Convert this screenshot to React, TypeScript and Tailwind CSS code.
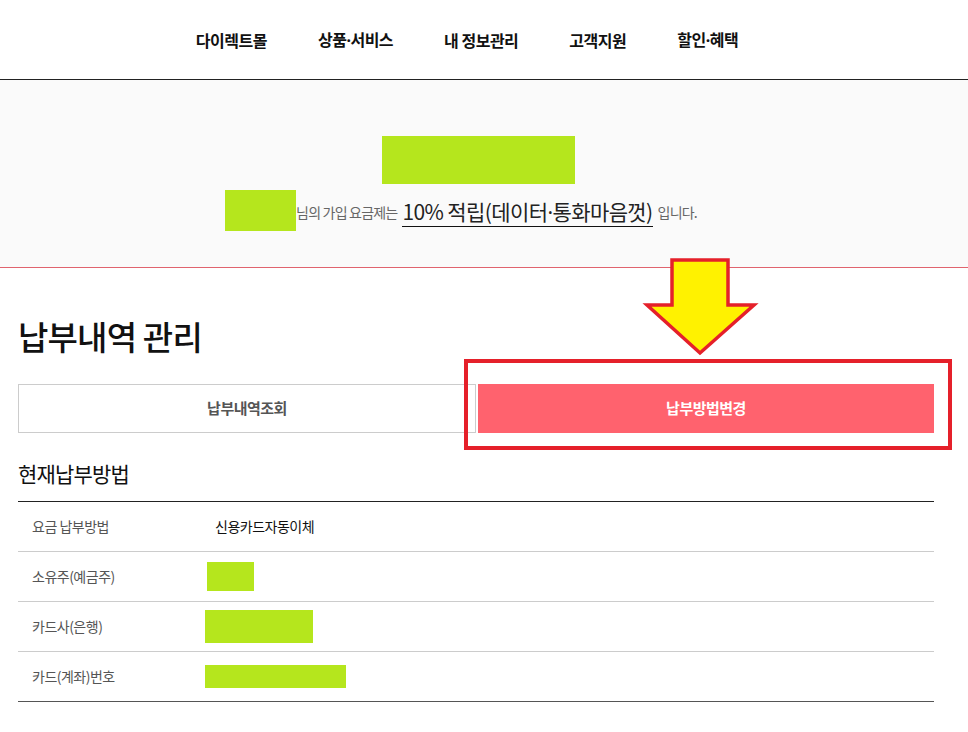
export default function App() {
    const font = { fontFamily: '"Noto Sans CJK KR", "Noto Sans", sans-serif' }
    const dot = <span style={{ fontFamily: '"Noto Sans", sans-serif' }}>·</span>
    const rows = [
        { label: '요금 납부방법', value: '신용카드자동이체' },
        { label: '소유주(예금주)', block: 'ml-[-8px] w-[47px] h-[29px]' },
        { label: '카드사(은행)', block: 'ml-[-10px] w-[108px] h-[33px]' },
        { label: '카드(계좌)번호', block: 'ml-[-10px] w-[141px] h-[23px]' },
    ]
    const nav = [
        <>다이렉트몰</>,
        <>상품{dot}서비스</>,
        <>내 정보관리</>,
        <>고객지원</>,
        <>할인{dot}혜택</>,
    ]

    return (
        <div className="relative w-[968px] h-[732px] bg-white overflow-hidden text-[#222]" style={font}>
            {/* top nav */}
            <header className="h-[80px] border-b border-[#222] flex items-center justify-center gap-[51px] pr-[34px]">
                {nav.map((t, i) => (
                    <span key={i} className="text-[16px] font-bold tracking-[-0.5px] text-[#111]">{t}</span>
                ))}
            </header>

            {/* plan banner */}
            <section className="h-[188px] bg-[#fafafa] border-b border-[#e0646e] flex flex-col items-center pt-[56px]">
                <div className="w-[193px] h-[48px] bg-[#b5e61d] mr-[12px]" />
                <div className="flex items-end mt-[6px] mr-[46px]">
                    <div className="w-[71px] h-[41px] bg-[#b5e61d]" />
                    <span className="text-[14px] text-[#666] tracking-[-0.8px] mb-[8px]">님의 가입 요금제는</span>
                    <span className="ml-[5px] text-[21px] text-[#222] tracking-[-0.6px] border-b border-[#111] leading-[26px] pb-[1px] mb-[4px]">10% 적립(데이터{dot}통화마음껏)</span>
                    <span className="ml-[5px] text-[14px] text-[#666] tracking-[-0.8px] mb-[8px]">입니다.</span>
                </div>
            </section>

            <main className="px-[18px] w-[952px]">
                <h1 className="mt-[48px] text-[33px] font-medium leading-[40px] tracking-[-0.8px] text-[#111]">납부내역 관리</h1>

                {/* tabs */}
                <div className="mt-[28px] flex gap-[2px] h-[49px]">
                    <div className="flex-1 border border-[#ccc] flex items-center justify-center text-[15px] font-bold text-[#555] tracking-[-0.5px]">납부내역조회</div>
                    <div className="flex-1 bg-[#ff626e] flex items-center justify-center text-[15px] font-bold text-white tracking-[-0.5px]">납부방법변경</div>
                </div>

                <h2 className="mt-[26px] text-[21px] leading-[28px] tracking-[-0.8px] text-[#111]">현재납부방법</h2>

                {/* payment method table */}
                <div className="mt-[14px] border-t border-[#222] border-b border-b-[#555]">
                    {rows.map((r, i) => (
                        <div key={r.label} className={`flex items-center ${i > 0 ? 'h-[50px] border-t border-[#ccc]' : 'h-[49px]'}`}>
                            <span className="w-[197px] pl-[14px] text-[14px] text-[#555] tracking-[-0.5px]">{r.label}</span>
                            {r.value ? (
                                <span className="text-[14px] text-[#111] tracking-[-0.5px]">{r.value}</span>
                            ) : (
                                <div className={`bg-[#b5e61d] ${r.block}`} />
                            )}
                        </div>
                    ))}
                </div>
            </main>

            {/* annotation overlay */}
            <svg className="absolute left-0 top-0 pointer-events-none" width="968" height="732">
                <polygon
                    points="672,260 728,260 728,305 754,305 700,353 647,305 672,305"
                    fill="#fff200"
                    stroke="#e5202a"
                    strokeWidth="3.5"
                    strokeLinejoin="miter"
                />
            </svg>
            <div className="absolute left-[464px] top-[359px] w-[488px] h-[91px] border-4 border-[#e5202a] pointer-events-none" />
        </div>
    )
}
